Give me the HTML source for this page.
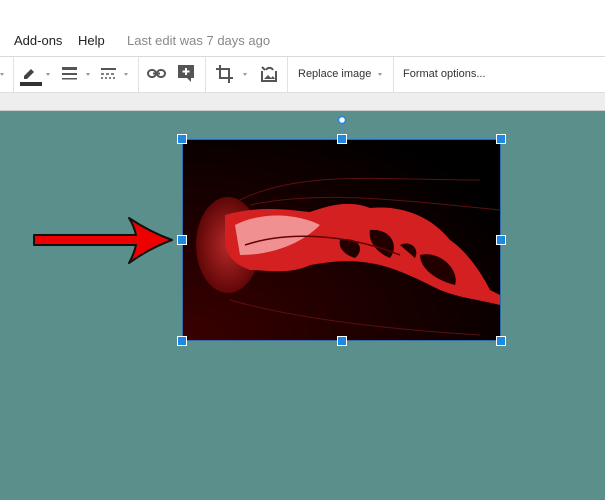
<!DOCTYPE html>
<html><head><style>
body{margin:0;width:605px;height:500px;overflow:hidden;font-family:"Liberation Sans",sans-serif;background:#5a8f8c;position:relative}
.top{position:absolute;left:0;top:0;width:605px;height:56px;background:#fff;border-bottom:1px solid #dadada}
.menu{position:absolute;top:33px;font-size:13px;color:#222}
.tb{position:absolute;left:0;top:57px;width:605px;height:35px;background:#fff;border-bottom:1px solid #e0e0e0}
.gray{position:absolute;left:0;top:93px;width:605px;height:17px;background:#eeeeee;border-bottom:1px solid #ccc}
.sep{position:absolute;top:0;width:1px;height:35px;background:#e2e2e2}
.t{position:absolute;top:11px;font-size:11px;color:#333}
.dd{position:absolute;top:16px;width:0;height:0;border-left:2.5px solid transparent;border-right:2.5px solid transparent;border-top:3px solid #999}
.h{position:absolute;width:10px;height:10px;background:#1e88e5;border:1px solid #fff;box-sizing:border-box}
</style></head><body>
<div class="top">
<span class="menu" style="left:14px">Add-ons</span>
<span class="menu" style="left:78px">Help</span>
<span class="menu" style="left:127px;color:#888">Last edit was 7 days ago</span>
</div>
<div class="tb">
<div class="dd" style="left:0"></div>
<div class="sep" style="left:13px"></div>
<svg style="position:absolute;left:18px;top:6px" width="26" height="24"><path d="M6 13 L13 6 L16 9 L9 16 L6 16Z" fill="#444"/><rect x="2" y="19" width="22" height="4" fill="#333"/></svg>
<div class="dd" style="left:46px"></div>
<svg style="position:absolute;left:62px;top:9px" width="16" height="16"><rect x="0" y="1" width="15" height="3" fill="#555"/><rect x="0" y="7" width="15" height="2" fill="#555"/><rect x="0" y="12" width="15" height="1.5" fill="#555"/></svg>
<div class="dd" style="left:86px"></div>
<svg style="position:absolute;left:101px;top:9px" width="16" height="16"><rect x="0" y="2" width="15" height="2" fill="#555"/><path d="M0 8h3M5 8h3M10 8h3" stroke="#555" stroke-width="1.5"/><path d="M0 12h2M4 12h2M8 12h2M12 12h2" stroke="#555" stroke-width="1.5"/></svg>
<div class="dd" style="left:124px"></div>
<div class="sep" style="left:138px"></div>
<svg style="position:absolute;left:147px;top:11px" width="20" height="12"><rect x="1" y="2" width="8" height="7" rx="3.5" fill="none" stroke="#555" stroke-width="2"/><rect x="10" y="2" width="8" height="7" rx="3.5" fill="none" stroke="#555" stroke-width="2"/><rect x="6" y="4.5" width="7" height="2" fill="#555"/></svg>
<svg style="position:absolute;left:178px;top:8px" width="18" height="20"><path d="M0 0h16v13h-3v4l-4-4H0z" fill="#555"/><path d="M8 3v7M4.5 6.5h7" stroke="#fff" stroke-width="2"/></svg>
<div class="sep" style="left:205px"></div>
<svg style="position:absolute;left:216px;top:8px" width="18" height="18"><path d="M4 0v13h13M0 4h13v14" fill="none" stroke="#555" stroke-width="2"/></svg>
<div class="dd" style="left:243px"></div>
<svg style="position:absolute;left:260px;top:8px" width="18" height="18"><path d="M2 6v10h14V6" fill="none" stroke="#555" stroke-width="2"/><path d="M4 14l4-4 3 3 2-2 2 3z" fill="#555"/><path d="M6 5a4 4 0 0 1 7 0" fill="none" stroke="#555" stroke-width="2"/><path d="M2 2l3 3" stroke="#555" stroke-width="2"/></svg>
<div class="sep" style="left:287px"></div>
<span class="t" style="left:298px">Replace image</span>
<div class="dd" style="left:378px"></div>
<div class="sep" style="left:393px"></div>
<span class="t" style="left:403px">Format options...</span>
</div>
<div class="gray"></div>
<svg style="position:absolute;left:0;top:0" width="605" height="500">
<defs>
<radialGradient id="bg" cx="0" cy="1" r="1.2"><stop offset="0" stop-color="#3a0000"/><stop offset="1" stop-color="#000"/></radialGradient>
<radialGradient id="bell" cx="0.5" cy="0.5" r="0.5"><stop offset="0" stop-color="#d03030"/><stop offset="1" stop-color="#6a0808"/></radialGradient>
</defs>
<rect x="182" y="139" width="319" height="202" fill="url(#bg)" stroke="#3d8fe0" stroke-width="1.5"/>
<path d="M240 200 C300 170 380 180 480 180 M250 205 C320 190 400 200 500 210 M230 300 C300 320 400 330 480 335" stroke="#5a1010" fill="none"/>
<ellipse cx="228" cy="245" rx="32" ry="48" fill="url(#bell)" opacity="0.85"/>
<path d="M225 215 C260 205 290 210 310 212 C330 205 350 200 370 208 C400 205 430 215 450 240 C465 250 480 270 490 290 L500 295 L500 305 C480 300 460 298 440 290 C420 280 400 270 380 265 C350 258 330 262 310 265 C290 275 265 270 250 270 C235 265 225 255 225 240Z" fill="#d42020"/>
<path d="M235 225 C265 210 300 215 320 225 C300 245 270 255 240 255Z" fill="#f4a4a4" opacity="0.85"/>
<path d="M340 240 C360 236 365 250 355 258 C345 255 338 248 340 240Z M370 230 C390 228 400 245 390 258 C375 252 368 240 370 230Z M420 255 C440 250 460 270 455 285 C435 280 420 268 420 255Z M400 245 C410 240 420 248 415 258Z" fill="#220000"/>
<path d="M245 245 C290 230 350 235 400 255" stroke="#600" stroke-width="1.5" fill="none"/>
<line x1="342" y1="124" x2="342" y2="139" stroke="#3d8fe0"/>
<circle cx="342" cy="120" r="3.5" fill="#fff" stroke="#1e88e5" stroke-width="1.5"/>
<path d="M34 235 H136 Q134 226 129 218 Q150 232 172 240 Q150 248 129 263 Q134 254 136 245 H34 Z" fill="#ee0000" stroke="#111" stroke-width="2" stroke-linejoin="round"/>
</svg>
<div class="h" style="left:177px;top:134px"></div>
<div class="h" style="left:337px;top:134px"></div>
<div class="h" style="left:496px;top:134px"></div>
<div class="h" style="left:177px;top:235px"></div>
<div class="h" style="left:496px;top:235px"></div>
<div class="h" style="left:177px;top:336px"></div>
<div class="h" style="left:337px;top:336px"></div>
<div class="h" style="left:496px;top:336px"></div>
</body></html>
